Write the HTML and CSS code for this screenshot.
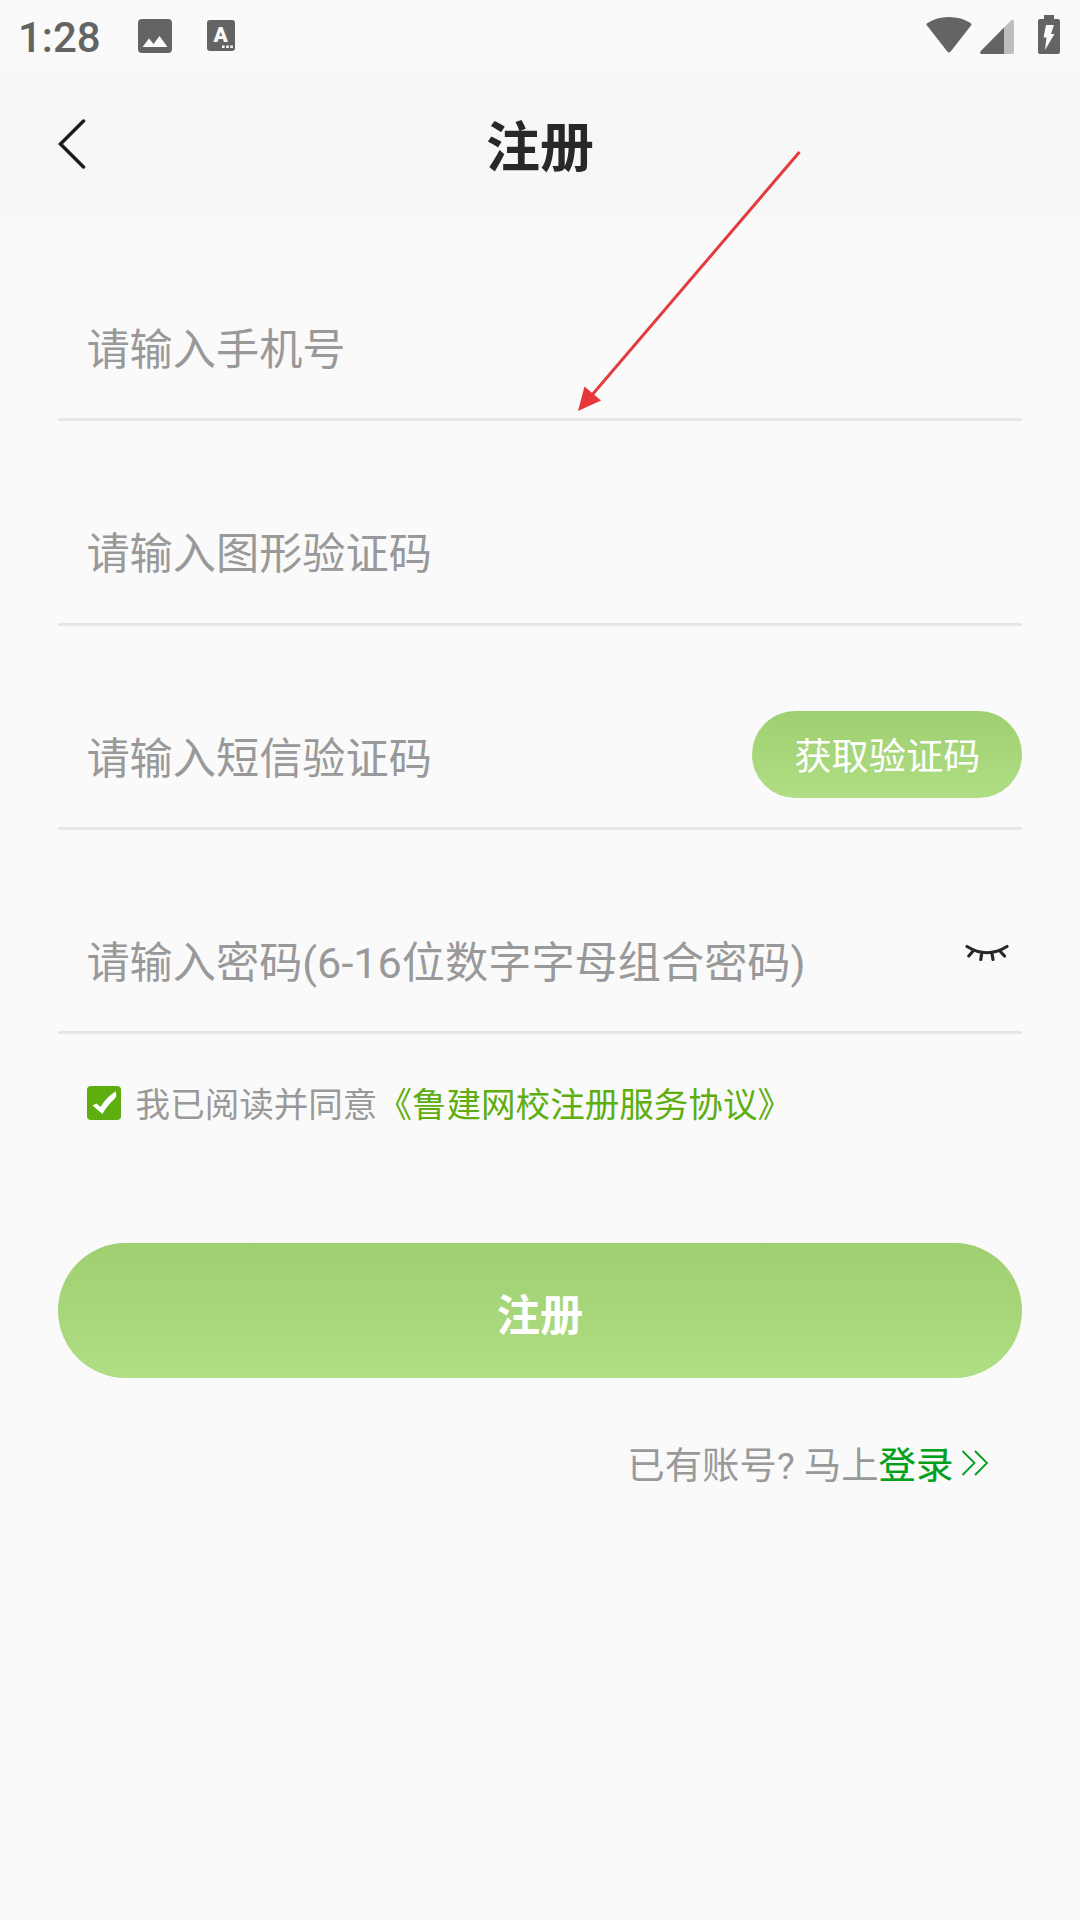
FILE: index.html
```html
<!DOCTYPE html>
<html lang="zh-CN">
<head>
    <meta charset="UTF-8">
    <meta name="viewport" content="width=device-width, initial-scale=1.0">
    <title>注册</title>
    <link rel="stylesheet" href="styles.css">
</head>
<body>
    <div class="status-bar">
        <span class="clock">1:28</span>
        <svg class="icon-picture" width="34" height="34" viewBox="0 0 34 34">
            <rect width="34" height="34" rx="4" fill="#646464"/>
            <path d="M4.500 28 L11 19.500 L15.500 25 L21.500 17 L29.500 28 Z" fill="#fafafa"/>
        </svg>
        <svg class="icon-input" width="28" height="31" viewBox="0 0 28 31">
            <rect width="28" height="31" rx="3" fill="#646464"/>
            <text x="13.700" y="22" text-anchor="middle" class="icon-letter">A</text>
            <path d="M15 25.500h2.600v2.600H15zM19.200 25.500h2.600v2.600h-2.600zM23.300 25.500h2.600v2.600h-2.600z" fill="#fafafa"/>
        </svg>
        <div class="status-right">
            <svg width="46" height="40" viewBox="0 0 46 40">
                <path d="M1.200 9.800 Q-0.300 8.200 1.400 7 Q10.500 1 23 1 Q35.500 1 44.600 7 Q46.200 8.200 44.800 9.800 L24.700 35.600 Q23 37.600 21.300 35.600 Z" fill="#646464"/>
            </svg>
            <svg class="icon-signal" width="34" height="40" viewBox="0 0 34 40">
                <path d="M24 11.500 L31 4.500 Q34 2.500 34 5.500 V36 Q34 38 32 38 H24 Z" fill="#bdbdbd"/>
                <path d="M24 11.500 V38 H1.500 Q-1 37.500 0.800 35 Z" fill="#646464"/>
            </svg>
            <svg class="icon-battery" width="22" height="40" viewBox="0 0 22 40">
                <path d="M6 0h10v4h4q2 0 2 2v31q0 2-2 2H2q-2 0-2-2V6q0-2 2-2h4z" fill="#646464"/>
                <path d="M8 10h8l-3 9h3.500L7 35l1.500-12.500H5.500z" fill="#fafafa"/>
            </svg>
        </div>
    </div>

    <div class="header">
        <a class="back">
            <svg width="30" height="50" viewBox="0 0 30 50">
                <path d="M26.500 2 L3.500 25 L26.500 48" fill="none" stroke="#1c1c1c" stroke-width="3.500" stroke-linecap="round"/>
            </svg>
        </a>
        <h1>注册</h1>
    </div>

    <form class="register-form">
        <div class="field">
            <input type="tel" placeholder="请输入手机号">
        </div>
        <div class="field">
            <input type="text" placeholder="请输入图形验证码">
        </div>
        <div class="field">
            <input type="text" placeholder="请输入短信验证码">
            <button type="button" class="code-btn">获取验证码</button>
        </div>
        <div class="field">
            <input type="password" placeholder="请输入密码(6-16位数字字母组合密码)">
            <svg class="eye" width="44" height="20" viewBox="0 0 44 20">
                <path d="M2 2.500 Q22 15 42 2.500 M8.500 6.500 L3.800 12 M16.800 8.500 L15.800 15.500 M26.800 8.500 L28 15.500 M34.500 6.500 L39.500 12" fill="none" stroke="#282828" stroke-width="3.200" stroke-linecap="round"/>
            </svg>
        </div>

        <div class="agreement">
            <svg class="checkbox" width="34" height="34" viewBox="0 0 34 34">
                <rect width="34" height="34" rx="4" fill="#5eae10"/>
                <path d="M5.500 19.500 L9.500 17.500 L13.500 21 Q19 11.500 28.500 5.500 Q30.500 9.500 27.500 13 Q20 19.500 15.500 28 Z" fill="#fff"/>
            </svg>
            <span>我已阅读并同意</span><a>《鲁建网校注册服务协议》</a>
        </div>

        <button type="button" class="submit-btn">注册</button>

        <div class="login">
            <span>已有账号? 马上</span><a>登录</a>
            <svg width="28" height="28" viewBox="0 0 28 28">
                <path d="M1.500 2 L13.500 14 L1.500 26 M14 2 L26 14 L14 26" fill="none" stroke="#00a01b" stroke-width="1.800"/>
            </svg>
        </div>
    </form>

    <!-- Pointer drawn over the page -->
    <svg class="arrow" width="224" height="262" viewBox="0 0 224 262">
        <path d="M221.500 2 L14 245" stroke="#e23c3f" stroke-width="3"/>
        <path d="M0 261 L6.500 236.500 L23 250.500 Z" fill="#e83738"/>
    </svg>
</body>
</html>
```
FILE: styles.css
```css
body {
    margin: 0;
    min-height: 1920px;
    position: relative;
    background: #fafafa;
    font-family: Roboto, "Noto Sans CJK SC", sans-serif;
    color: #999;
}

svg {
    display: block;
    flex-shrink: 0;
}

/* Status bar */
.status-bar {
    display: flex;
    height: 72px;
    padding: 0 20px 0 18px;
    box-sizing: border-box;
}

.clock {
    width: 120px;
    font-size: 42px;
    font-weight: 500;
    line-height: 76px;
    color: #646464;
}

.icon-picture {
    margin-top: 19px;
}

.icon-input {
    margin: 20px 0 0 35px;
}

.icon-letter {
    font-size: 21px;
    font-weight: 900;
    fill: #fafafa;
}

.status-right {
    display: flex;
    margin: 16px 0 0 auto;
}

.icon-signal {
    margin-left: 8px;
}

.icon-battery {
    margin: -1px 0 0 24px;
}

/* Header */
.header {
    display: grid;
    grid-template-columns: 120px 1fr 120px;
    align-items: center;
    height: 144px;
    background: #f7f7f7;
}

.back {
    padding-left: 57px;
}

.header h1 {
    margin: 0;
    padding-top: 10px;
    font-size: 54px;
    line-height: 80px;
    text-align: center;
    color: #282828;
}

/* Form */
.register-form {
    padding: 1px 57.6px 0;
}

.field {
    display: flex;
    align-items: center;
    height: 204.25px;
    padding: 65px 0 0 28.800px;
    box-sizing: border-box;
    border-bottom: 3px solid #e6e6e6;
}

.field input {
    flex: 1;
    min-width: 0;
    height: 100px;
    padding: 1px 0 0;
    border: none;
    outline: none;
    background: none;
    font-family: inherit;
    font-size: 43.200px;
    color: #333;
}

.field input::placeholder {
    color: #999;
}

.code-btn,
.submit-btn {
    border: none;
    padding: 0;
    background: linear-gradient(#9ecf70, #b0de84);
    color: #fff;
    font-family: inherit;
}

.code-btn {
    width: 270px;
    height: 86.400px;
    margin-bottom: 8px;
    padding-bottom: 1px;
    border-radius: 44px;
    font-size: 37.200px;
}

.eye {
    margin: 0 13px 17px 0;
}

.agreement {
    display: flex;
    align-items: center;
    height: 50px;
    margin-top: 44px;
    padding-left: 29px;
    font-size: 34.560px;
}

.agreement span,
.agreement a {
    margin-bottom: 3px;
}

.checkbox {
    margin-right: 15px;
}

.agreement a {
    color: #5eae10;
}

.submit-btn {
    display: block;
    width: 100%;
    height: 135px;
    margin-top: 115px;
    padding-top: 3px;
    border-radius: 68px;
    font-size: 43.200px;
    font-weight: bold;
}

.login {
    display: flex;
    justify-content: flex-end;
    align-items: center;
    height: 60px;
    margin-top: 55px;
    padding-right: 33px;
    font-size: 37.400px;
}

.login a {
    margin-right: 8px;
    color: #00a01b;
    -webkit-text-stroke: 0.2px #00a01b;
}

.arrow {
    position: absolute;
    left: 578px;
    top: 150px;
}
```
